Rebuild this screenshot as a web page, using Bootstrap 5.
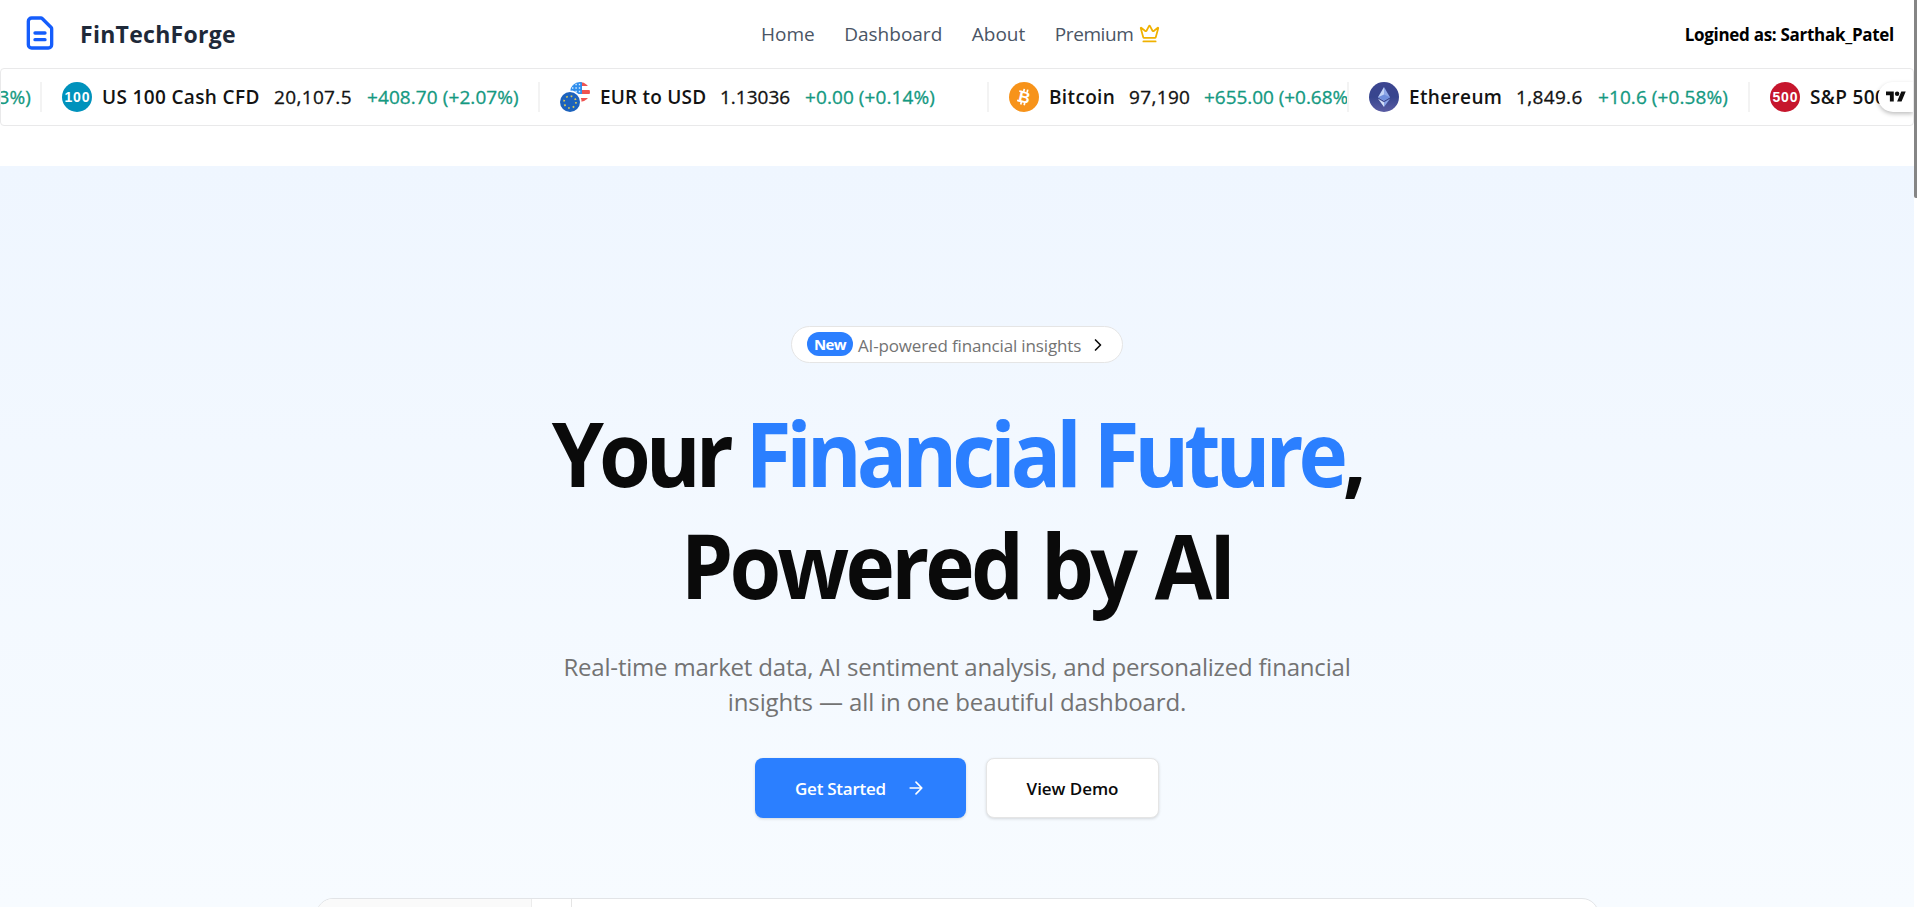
<!DOCTYPE html>
<html lang="en">
<head>
<meta charset="utf-8">
<title>FinTechForge</title>
<link href="https://cdn.jsdelivr.net/npm/bootstrap@5.3.0/dist/css/bootstrap.min.css" rel="stylesheet">
<style>
body{font-family:"Open Sans","Noto Sans",sans-serif;color:#0a0a0a;background:#fff;overflow:hidden;height:907px}
.page{width:1914px;height:907px;overflow:hidden;flex:none}
.rail{width:3px;height:907px;background:#fff}
.rail-thumb{height:198px;background:#858585;border-radius:0 0 0 2px}
svg{flex:none;display:block}
.topbar{height:68px;padding:0 20px;display:grid;grid-template-columns:741px auto 1fr;align-items:center}
.brand-name{font-size:23px;font-weight:700;color:#1e2939;line-height:1;letter-spacing:.28px;margin:1px 0 0 20px}
.brand-logo{margin-top:-2px}
.menu{gap:29.5px;line-height:1}
.menu .item{font-size:19px;color:#4a5565;text-decoration:none}
.menu .premium{letter-spacing:-.4px}
.menu svg{margin-left:6px;margin-top:-2px}
.login{font-size:17px;font-weight:700;color:#000;line-height:1;letter-spacing:-.29px}
.ticker{height:58px;border:1px solid #e9e9ea;border-radius:4px;overflow:hidden;position:relative;padding-top:13px}
.tick{height:30px;flex:none;border-left:2px solid #f3f3f3;display:grid;padding-left:20px;overflow:hidden;font-size:19px;line-height:30px;color:#131313;white-space:nowrap}
.tick-tail{width:39px;border:0;padding:0 9px 0 0;display:flex;justify-content:flex-end}
.tick-us{width:498px;grid-template-columns:40px 172px 93px 1fr}
.tick-eur{width:449px;grid-template-columns:40px 120px 85px 1fr}
.tick-btc{width:360px;grid-template-columns:40px 80px 75px 1fr}
.tick-eth{width:401px;grid-template-columns:40px 107px 82px 1fr}
.tick-sp{width:200px;grid-template-columns:40px 1fr}
.nm{font-weight:600;letter-spacing:.35px}
.pr{letter-spacing:.35px;-webkit-text-stroke:.3px}
.tick-eur .pr{letter-spacing:0}
.tick-eur .nm{letter-spacing:.2px}
.up{color:#149981;letter-spacing:.08px;-webkit-text-stroke:.3px}
.tick-btc .up{letter-spacing:-.05px}
.tv{position:absolute;right:0;top:13px;width:35px;height:30px;background:#fff;border-radius:15px 0 0 15px;box-shadow:0 2px 4px rgba(0,0,0,.25);padding:7px 0 0 8px}
.coin-text{font:bold 14px "Liberation Sans",sans-serif;fill:#fff;text-anchor:middle}
.coin-b{font-size:16px}
.hero{margin-top:40px;height:741px;background:linear-gradient(#eff6ff,#f7fbff)}
.pill{width:332px;height:37px;margin-top:160px;background:#fff;border:1px solid #e5e5e5;padding:0 15px;flex:none}
.new{width:46px;height:24px;border-radius:12px;background:#2b7fff;color:#fff;font-size:15px;font-weight:700;line-height:24px;text-align:center;letter-spacing:-.6px;flex:none;margin-top:-1px}
.note{font-size:17px;color:#737373;line-height:1;letter-spacing:-.15px;margin:1px 0 0 5px;width:224px;flex:none;white-space:nowrap}
.pill svg{margin-left:6px}
.headline{font-size:89px;font-weight:700;line-height:112px;margin:34px 0 0;white-space:nowrap;letter-spacing:-5.35px;text-align:center;transform:scaleX(.94)}
.headline em{font-style:normal;color:#2b7fff}
.headline .second{letter-spacing:-4px;word-spacing:3px}
.sub{font-size:24px;line-height:35px;color:#737373;white-space:nowrap;text-align:center;letter-spacing:-.2px;margin:28px 0 39px}
.sub .second{letter-spacing:-.12px}
.cta-row{gap:20px}
.cta{height:60px;border-radius:8px;font-size:17px;font-weight:600;padding:0;line-height:1;border:0;box-shadow:0 1px 3px rgba(0,0,0,.14)}
.cta-go{width:211px;padding-left:40px;background:#2b7fff;color:#fff;letter-spacing:-.25px}
.cta-go svg{margin-left:20px}
.cta-demo{width:173px;border:1px solid #e5e5e5;background:#fff;color:#0a0a0a;letter-spacing:-.05px}
.preview{width:1283px;height:60px;margin-top:80px;border:1px solid #e2e4e7;border-radius:17px 17px 0 0;background:#fff;overflow:hidden;flex:none}
.preview-side{width:215px;background:#fafafa;border-right:1px solid #ececec}
.preview-gap{width:40px;border-right:1px solid #e5e5e5}
</style>
</head>
<body class="d-flex">
<div class="page">
<header class="topbar">
<div class="d-flex align-items-center">
<svg class="brand-logo" width="40" height="40" viewBox="0 0 24 24" fill="none" stroke="#155dfc" stroke-width="2" stroke-linecap="round" stroke-linejoin="round"><path d="M9 12h6m-6 4h6m2 5H7a2 2 0 01-2-2V5a2 2 0 012-2h5.586a1 1 0 01.707.293l5.414 5.414a1 1 0 01.293.707V19a2 2 0 01-2 2z"/></svg>
<span class="brand-name">FinTechForge</span>
</div>
<nav class="menu d-flex align-items-center"><a class="item" href="#">Home</a><a class="item" href="#">Dashboard</a><a class="item" href="#">About</a><a class="item premium d-flex align-items-center" href="#">Premium
<svg width="21" height="21" viewBox="0 0 24 24" fill="none" stroke="#f0b100" stroke-width="2" stroke-linecap="round" stroke-linejoin="round"><path d="M11.562 3.266a.5.5 0 0 1 .876 0L15.39 8.87a1 1 0 0 0 1.516.294L21.183 5.5a.5.5 0 0 1 .798.519l-2.834 10.246a1 1 0 0 1-.956.734H5.81a1 1 0 0 1-.957-.734L2.02 6.02a.5.5 0 0 1 .798-.519l4.276 3.664a1 1 0 0 0 1.516-.294z"/><path d="M5 21h14"/></svg></a></nav>
<div class="login text-end">Logined as: Sarthak_Patel</div>
</header>

<section class="ticker d-flex">
<div class="tick tick-tail"><span class="up">3%)</span></div>
<div class="tick tick-us">
<svg width="30" height="30"><circle cx="15" cy="15" r="15" fill="#0092bc"/><text class="coin-text" x="15" y="20" textLength="25">100</text></svg>
<span class="nm">US 100 Cash CFD</span><span class="pr">20,107.5</span><span class="up">+408.70 (+2.07%)</span></div>
<div class="tick tick-eur">
<svg width="30" height="30"><defs><clipPath id="us"><circle cx="20" cy="10" r="10"/></clipPath></defs>
<g clip-path="url(#us)"><path fill="#fff" d="M10 0h20v20H10z"/><path fill="#ef5350" d="M20 0h10v4H20zM20 8h10v4H20zM10 16h20v4H10z"/><path fill="#2f8eed" d="M10 0h12v12H10z"/><path stroke="#d6ecff" stroke-width="1.4" stroke-dasharray="1.4 2" d="M12 2.5h10M12 6h10M12 9.500h10"/></g>
<circle cx="10" cy="20" r="11.500" fill="#fff"/><circle cx="10" cy="20" r="10" fill="#1c62bd"/><circle cx="10" cy="20" r="6" fill="none" stroke="#d8c95a" stroke-width="1.700" stroke-dasharray="1.700 3.012"/></svg>
<span class="nm">EUR to USD</span><span class="pr">1.13036</span><span class="up">+0.00 (+0.14%)</span></div>
<div class="tick tick-btc">
<svg width="30" height="30"><circle cx="15" cy="15" r="15" fill="#f7931a"/><g transform="rotate(13 15 15)"><text class="coin-text coin-b" x="15.500" y="20.500">B</text><path d="M13.500 7v3M17 7v3M13.500 20v3M17 20v3M9 10.200h4M9 19.800h4" stroke="#fff" stroke-width="1.700"/></g></svg>
<span class="nm">Bitcoin</span><span class="pr">97,190</span><span class="up">+655.00 (+0.68%</span></div>
<div class="tick tick-eth">
<svg width="30" height="30"><defs><linearGradient id="eg" x2="0" y2="1"><stop stop-color="#3c4590"/><stop offset=".5" stop-color="#37458e"/><stop offset="1" stop-color="#5a5ca3"/></linearGradient></defs><circle cx="15" cy="15" r="15" fill="url(#eg)"/><path fill="#c3d3f6" d="M15 5L9 15.200l6 3.500z"/><path fill="#8fa8e8" d="M15 5l6 10.200-6 3.500z"/><path fill="#6f8edd" d="M9 15.200l6-2.600 6 2.600-6 3.500z"/><path fill="#d3def8" d="M9 16.800l6 3.500V25z"/><path fill="#8ba5e8" d="M21 16.800l-6 3.500V25z"/></svg>
<span class="nm">Ethereum</span><span class="pr">1,849.6</span><span class="up">+10.6 (+0.58%)</span></div>
<div class="tick tick-sp">
<svg width="30" height="30"><circle cx="15" cy="15" r="15" fill="#c6162d"/><text class="coin-text" x="15" y="20" textLength="25">500</text></svg>
<span class="nm">S&amp;P 500</span></div>
<div class="tv"><svg width="20" height="16" viewBox="0 0 36 28" fill="#0f0f0f"><path d="M14 22H7V11H0V4h14v18zM28 22h-8l7.500-18h8L28 22z"/><circle cx="20" cy="8" r="4"/></svg></div>
</section>

<main class="hero d-flex flex-column align-items-center">
<div class="pill rounded-pill d-flex align-items-center"><span class="new">New</span><span class="note">AI-powered financial insights</span>
<svg width="20" height="20" viewBox="0 0 24 24" fill="none" stroke="#0a0a0a" stroke-width="2" stroke-linecap="round" stroke-linejoin="round"><path d="m9 18 6-6-6-6"/></svg></div>
<h1 class="headline">Your <em>Financial Future</em>,<br><span class="second">Powered by AI</span></h1>
<p class="sub">Real-time market data, AI sentiment analysis, and personalized financial<br><span class="second">insights — all in one beautiful dashboard.</span></p>
<div class="cta-row d-flex">
<button class="btn cta cta-go d-flex align-items-center">Get Started
<svg width="20" height="20" viewBox="0 0 24 24" fill="none" stroke="#fff" stroke-width="2" stroke-linecap="round" stroke-linejoin="round"><path d="M5 12h14M12 5l7 7-7 7"/></svg></button>
<button class="btn cta cta-demo">View Demo</button>
</div>
<div class="preview d-flex"><div class="preview-side"></div><div class="preview-gap"></div></div>
</main>
</div>
<div class="rail"><div class="rail-thumb"></div></div>
<script src="https://cdn.jsdelivr.net/npm/bootstrap@5.3.0/dist/js/bootstrap.bundle.min.js"></script>
</body>
</html>
